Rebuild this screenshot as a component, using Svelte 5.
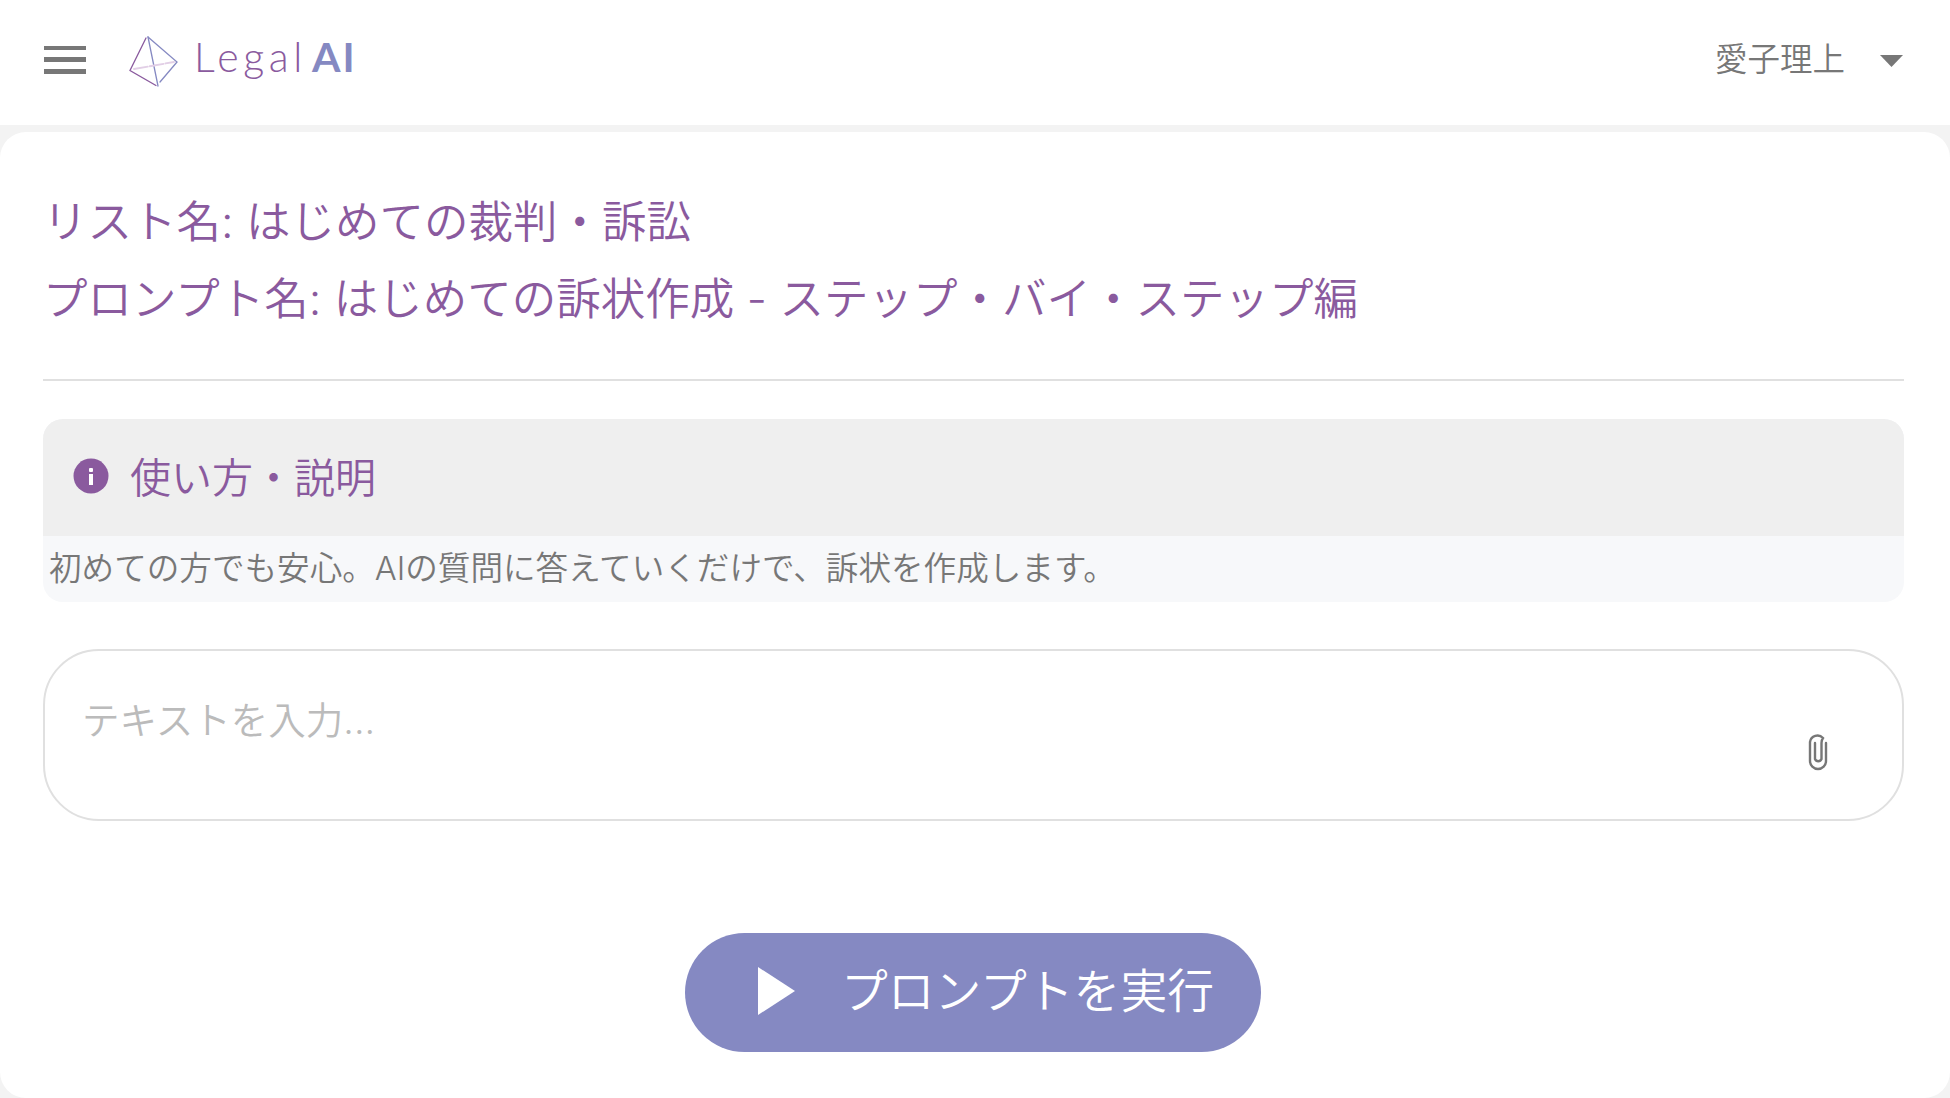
<script>
  const titles = [
    'リスト名: はじめての裁判・訴訟',
    'プロンプト名: はじめての訴状作成 - ステップ・バイ・ステップ編'
  ];
</script>

<div class="page">
  <header class="topbar">
    <div class="left">
      <button class="menu" aria-label="menu"><span></span><span></span><span></span></button>
      <div class="logo">
        <svg class="mark" viewBox="0 0 52 54" width="52" height="54" fill="none" stroke-linecap="round">
          <path d="M18 2 L2 34.500 L28 49.500" stroke="#8a5a9e" stroke-width="1.300"/>
          <path d="M20 1 L49 26 L32 46" stroke="#8589c2" stroke-width="1.300"/>
          <path d="M20 1 L30 50" stroke="#8589c2" stroke-width="1.300"/>
          <path d="M6 33 L46 26" stroke="#e2cfe6" stroke-width="1.800" stroke-dasharray="14 2"/>
        </svg>
        <span class="legal">Legal</span><span class="ai">AI</span>
      </div>
    </div>
    <div class="user">
      <span class="user-name">愛子理上</span>
      <svg class="caret" viewBox="0 0 24 12" width="24" height="12"><path d="M0 0 H23 L11.500 12 Z" fill="#777"/></svg>
    </div>
  </header>

  <main class="card">
    <div class="titles">
      {#each titles as t}
        <div class="title">{t}</div>
      {/each}
    </div>
    <hr />
    <section class="info">
      <div class="info-head">
        <svg viewBox="0 0 36 36" width="36" height="36">
          <circle cx="18" cy="18" r="17.500" fill="#8a5a9e"/>
          <rect x="16" y="16" width="4" height="11" fill="#fff"/>
          <rect x="16" y="10" width="4" height="4" rx="1" fill="#fff"/>
        </svg>
        <span class="info-label">使い方・説明</span>
      </div>
      <p class="info-body">初めての方でも安心。AIの質問に答えていくだけで、訴状を作成します。</p>
    </section>
    <div class="input">
      <span class="placeholder">テキストを入力...</span>
      <svg class="clip" viewBox="0 0 20 38" width="20" height="38" fill="none" stroke="#777" stroke-width="2.400" stroke-linecap="round">
        <path d="M18 10 V28 A8 8 0 0 1 2 28 V9 A7.500 7.500 0 0 1 15 5 Q13.500 7 13.500 10 V26 A3.500 3.500 0 0 1 7 26 V10"/>
      </svg>
    </div>
    <div class="actions">
      <button class="run">
        <svg viewBox="0 0 37 48" width="37" height="48"><path d="M0 0 L37 24 L0 48 Z" fill="#fff"/></svg>
        <span class="run-label">プロンプトを実行</span>
      </button>
    </div>
  </main>
</div>

<style>
  :global(body) {
    margin: 0;
    background: #fff;
    font-family: Inter, "Noto Sans CJK JP", "Noto Sans", sans-serif;
  }
  .page {
    width: 1950px;
    height: 1098px;
    overflow: hidden;
    background: #f3f3f3;
    display: flex;
    flex-direction: column;
  }
  .topbar {
    height: 125px;
    box-sizing: border-box;
    background: #fff;
    display: flex;
    align-items: center;
    justify-content: space-between;
    padding: 0 46px 6px 44px;
    flex: none;
  }
  .left {
    display: flex;
    align-items: center;
    gap: 42px;
  }
  .menu {
    width: 42px;
    height: 28px;
    padding: 0;
    border: 0;
    background: none;
    display: flex;
    flex-direction: column;
    justify-content: space-between;
  }
  .menu span {
    height: 4.500px;
    background: #777;
  }
  .logo {
    display: flex;
    align-items: center;
    color: #8a5a9e;
  }
  .mark { margin-right: 14px; margin-top: 6px; }
  .legal {
    font-family: Lato, sans-serif;
    font-weight: 300;
    font-size: 41px;
    letter-spacing: 4.600px;
    line-height: 1;
    margin: 0 5px 6px 0;
  }
  .ai {
    font-family: Lato, sans-serif;
    font-weight: 700;
    font-size: 41px;
    letter-spacing: 2px;
    line-height: 1;
    color: #8589c2;
    margin-bottom: 6px;
  }
  .user {
    display: flex;
    align-items: center;
    gap: 35px;
    color: #777;
    font-size: 32.500px;
    font-weight: 350;
  }
  .user-name {
    font-family: "Noto Sans CJK JP", sans-serif;
    line-height: 47px;
    padding-bottom: 6px;
  }
  .caret { margin-top: 2px; }
  .card {
    flex: 1;
    margin-top: 7px;
    background: #fff;
    border-radius: 26px;
    padding: 0 46px 0 43px;
    display: flex;
    flex-direction: column;
  }
  .titles {
    padding-top: 59px;
    display: flex;
    flex-direction: column;
    gap: 14px;
  }
  .title {
    color: #8a5a9e;
    font-size: 44.500px;
    line-height: 63px;
    font-weight: 350;
  }
  hr {
    border: 0;
    border-top: 2px solid #e0e0e0;
    margin: 48px 0 38px;
  }
  .info {
    border-radius: 20px;
    overflow: hidden;
    background: #f7f8fa;
  }
  .info-head {
    height: 117px;
    background: #efefef;
    display: flex;
    align-items: center;
    gap: 21px;
    padding-left: 30px;
    color: #8a5a9e;
    font-size: 41px;
    font-weight: 350;
  }
  .info-head svg { margin-bottom: 3px; }
  .info-label {
    line-height: 59px;
    padding-top: 2px;
  }
  .info-body {
    margin: 0;
    height: 66px;
    padding-left: 6px;
    line-height: 65px;
    color: #777;
    font-size: 32.600px;
    font-weight: 350;
  }
  .input {
    margin-top: 47px;
    height: 172px;
    box-sizing: border-box;
    border: 2px solid #e0e0e0;
    border-radius: 56px;
    padding: 43px 74px 0 37px;
    display: flex;
    justify-content: space-between;
    color: #bbb;
    font-size: 37.500px;
    font-weight: 350;
  }
  .placeholder { line-height: 54px; }
  .clip { margin-top: 39px; }
  .actions {
    display: flex;
    justify-content: center;
    margin-top: 112px;
    padding-right: 1px;
  }
  .run {
    width: 576px;
    height: 119px;
    border: 0;
    border-radius: 60px;
    background: #8589c2;
    color: #fff;
    font: inherit;
    font-size: 46.800px;
    font-weight: 350;
    display: flex;
    align-items: center;
    padding: 0 0 0 73px;
    gap: 46px;
  }
  .run svg { margin-bottom: 3px; }
  .run-label {
    line-height: 68px;
    padding-bottom: 3px;
  }
</style>
